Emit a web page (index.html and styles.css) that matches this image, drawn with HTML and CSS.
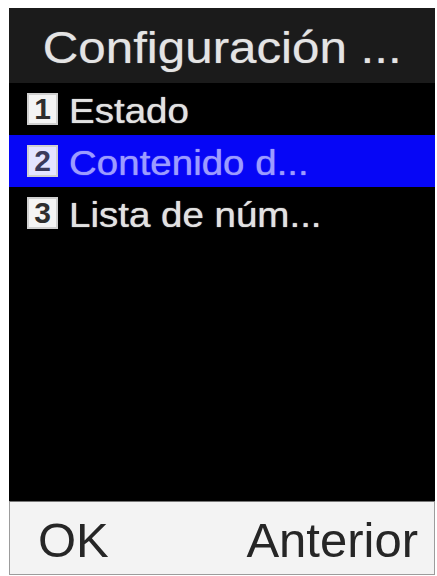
FILE: index.html
```html
<!DOCTYPE html>
<html lang="es">
<head>
<meta charset="utf-8">
<title>Configuración</title>
<link rel="stylesheet" href="styles.css">
</head>
<body>
<div class="screen">
  <div class="title"><span class="title-text">Configuración ...</span></div>
  <ul class="menu">
    <li class="item"><span class="badge">1</span><span class="label">Estado</span></li>
    <li class="item selected"><span class="badge">2</span><span class="label">Contenido d...</span></li>
    <li class="item"><span class="badge">3</span><span class="label">Lista de núm...</span></li>
  </ul>
  <div class="softkeys"><span class="key">OK</span><span class="key">Anterior</span></div>
</div>
</body>
</html>
```
FILE: styles.css
```css
html, body {
  margin: 0;
  padding: 0;
  background: #ffffff;
  font-family: "Liberation Sans", Arial, sans-serif;
}
.screen {
  margin: 8px 2px 1px 9px;
  width: 426px;
  height: 567px;
  display: flex;
  flex-direction: column;
  background: #000;
}
.title {
  height: 75px;
  background: #1b1b1b;
  display: flex;
  justify-content: center;
  align-items: flex-start;
  padding-top: 9px;
  box-sizing: border-box;
}
.title-text {
  display: inline-block;
  font-size: 44px;
  line-height: 62px;
  color: #e4e4e4;
  transform: scaleX(1.12);
  transform-origin: center;
  white-space: nowrap;
  text-shadow: 0 0 1px rgba(228, 228, 228, 0.6);
}
.menu {
  list-style: none;
  margin: 0;
  padding: 0;
  flex: 1;
  background: #000;
}
.item {
  height: 52px;
  display: flex;
  align-items: center;
  padding-left: 18px;
  color: #e2e2e2;
}
.item.selected {
  background: #0606f6;
  color: #9c9cff;
}
.badge {
  width: 31px;
  height: 32px;
  background: #f4f4f4;
  color: #2e2e2e;
  font-weight: bold;
  font-size: 30px;
  line-height: 32px;
  text-align: center;
  margin-right: 11px;
  box-shadow: inset 0 0 0 2px #d0d0d0;
  flex: none;
}
.selected .badge {
  background: #e4e4ff;
  color: #3a3a5a;
}
.label {
  display: inline-block;
  font-size: 35px;
  line-height: 52px;
  padding-top: 3px;
  transform: scaleX(1.1);
  transform-origin: left center;
  white-space: nowrap;
  text-shadow: 0 0 1px currentColor;
}
.softkeys {
  height: 74px;
  box-sizing: border-box;
  background: #f3f3f3;
  border: 1px solid #9c9c9c;
  border-top-color: #777;
  display: flex;
  justify-content: space-between;
  align-items: center;
  padding: 3px 16px 0 28px;
  color: #262626;
  font-size: 49px;
  line-height: 60px;
}
.key {
  white-space: nowrap;
}
```
